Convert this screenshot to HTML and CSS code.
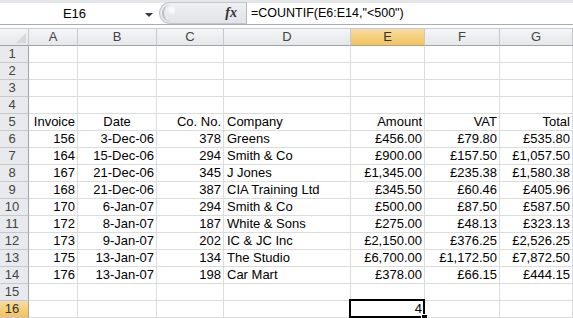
FILE: index.html
```html
<!DOCTYPE html>
<html lang="en">
<head>
    <meta charset="UTF-8">
    <title>Invoices - COUNTIF</title>
    <link rel="stylesheet" href="styles.css">
</head>
<body>

<!-- Formula bar: name box, fx button, formula -->
<div class="formula-bar">
    <div class="name-box">
        <span class="name">E16</span>
        <span class="arrow"></span>
    </div>
    <div class="fx-area">
        <span class="grip"></span>
        <span class="fx">fx</span>
    </div>
    <div class="formula">=COUNTIF(E6:E14,"&lt;500")</div>
</div>

<!-- Worksheet grid, filled in by the script below -->
<div id="sheet" class="sheet"></div>

<script>
// Column letters and the selected cell
const columns = ['A', 'B', 'C', 'D', 'E', 'F', 'G'];
const selectedCol = 'E';
const selectedRow = 16;

// Row data: [row number, A..G]. Alignment: r = right, c = centre, l = left
const align = ['r', 'r', 'r', 'l', 'r', 'r', 'r'];
const data = {
    5:  ['Invoice', 'Date', 'Co. No.', 'Company', 'Amount', 'VAT', 'Total'],
    6:  ['156', '3-Dec-06', '378', 'Greens', '£456.00', '£79.80', '£535.80'],
    7:  ['164', '15-Dec-06', '294', 'Smith & Co', '£900.00', '£157.50', '£1,057.50'],
    8:  ['167', '21-Dec-06', '345', 'J Jones', '£1,345.00', '£235.38', '£1,580.38'],
    9:  ['168', '21-Dec-06', '387', 'CIA Training Ltd', '£345.50', '£60.46', '£405.96'],
    10: ['170', '6-Jan-07', '294', 'Smith & Co', '£500.00', '£87.50', '£587.50'],
    11: ['172', '8-Jan-07', '187', 'White & Sons', '£275.00', '£48.13', '£323.13'],
    12: ['173', '9-Jan-07', '202', 'IC & JC Inc', '£2,150.00', '£376.25', '£2,526.25'],
    13: ['175', '13-Jan-07', '134', 'The Studio', '£6,700.00', '£1,172.50', '£7,872.50'],
    14: ['176', '13-Jan-07', '198', 'Car Mart', '£378.00', '£66.15', '£444.15'],
    16: ['', '', '', '', '4', '', '']
};

function cell(className, text) {
    const div = document.createElement('div');
    div.className = className;
    div.textContent = text;
    return div;
}

const sheet = document.getElementById('sheet');

// Header row
sheet.appendChild(cell('corner', ''));
columns.forEach(col => {
    sheet.appendChild(cell(col === selectedCol ? 'col-head active' : 'col-head', col));
});

// Body rows
for (let r = 1; r <= 16; r++) {
    sheet.appendChild(cell(r === selectedRow ? 'row-head active' : 'row-head', r));
    const values = data[r] || [];
    columns.forEach((col, i) => {
        let cls = 'cell ' + align[i];
        if (r === 5 && col === 'B') cls = 'cell c'; // "Date" heading is centred
        if (r === selectedRow && col === selectedCol) cls += ' selected';
        sheet.appendChild(cell(cls, values[i] || ''));
    });
}
</script>

</body>
</html>
```

FILE: styles.css
```css
body {
    margin: 0;
    font-family: 'Liberation Sans', Arial, sans-serif;
    font-size: 13px;
    color: #000;
    background: #ffffff;
    overflow: hidden;
}

/* ---------- formula bar ---------- */
.formula-bar {
    display: flex;
    height: 21px;
    border-top: 3px solid #e4e6e9;
    border-bottom: 1px solid #a9adb3;
    margin-bottom: 3px;
    background: #ffffff;
}

.formula-bar + .sheet {
    border-top: 1px solid #c9ccd1;
}

.name-box {
    width: 159px;
    display: flex;
    align-items: center;
    flex-shrink: 0;
}

.name {
    flex: 1;
    text-align: center;
    padding-left: 4px;
    font-size: 13px;
}

.arrow {
    width: 0;
    height: 0;
    border-left: 4px solid transparent;
    border-right: 4px solid transparent;
    border-top: 4px solid #3c3c3c;
    margin: 2px 6px 0 0;
}

.fx-area {
    width: 88px;
    flex-shrink: 0;
    display: flex;
    align-items: center;
    justify-content: space-between;
    background: linear-gradient(#eef0f3, #e1e4e8);
    border: 1px solid #c3c7cc;
    border-right: 1px solid #b5b9bf;
    border-radius: 11px 0 0 11px;
    margin: -1px 0 0 0;
    box-sizing: border-box;
    height: 22px;
}

.grip {
    width: 11px;
    height: 16px;
    margin-left: 2px;
    border-radius: 8px 0 0 8px;
    border-left: 2px solid #b9bec5;
    background: radial-gradient(circle at 8px 5px, #ffffff 0, #f4f5f7 3px, transparent 5px);
}

.fx {
    font-family: 'Liberation Serif', 'Times New Roman', serif;
    font-style: italic;
    font-weight: bold;
    font-size: 14px;
    color: #333;
    margin-right: 9px;
}

.formula {
    flex: 1;
    padding-left: 4px;
    font-size: 12.5px;
    line-height: 21px;
}

/* ---------- worksheet grid ---------- */
.sheet {
    display: grid;
    grid-template-columns: 29px 49px 79px 67px 127px 74px 75px 73px;
    grid-auto-rows: 17px;
}

.sheet > div {
    box-sizing: border-box;
    border-right: 1px solid #dadcdd;
    border-bottom: 1px solid #dadcdd;
    line-height: 16px;
    white-space: nowrap;
    overflow: hidden;
}

.corner,
.col-head,
.row-head {
    background: linear-gradient(#f5f6f7, #e5e7ea);
    color: #444;
}

.sheet > .corner {
    border-right: 1px solid #c5c8cc;
    border-bottom: 1px solid #9ea4ab;
    position: relative;
}

.corner::after {
    content: '';
    position: absolute;
    right: 2px;
    bottom: 2px;
    border-left: 10px solid transparent;
    border-bottom: 10px solid #d5d9de;
}

.sheet > .col-head {
    text-align: center;
    border-right: 1px solid #c5c8cc;
    border-bottom: 1px solid #9ea4ab;
}

.sheet > .row-head {
    text-align: center;
    background: #e8eaed;
    border-right: 1px solid #9ea4ab;
    border-bottom: 1px solid #c5c8cc;
    padding-right: 4px;
}

.sheet > .active {
    background: linear-gradient(#f9dc9c, #f2c35f);
    color: #333;
}

.cell {
    padding: 0 3px;
}

.cell.r { text-align: right; padding-right: 2px; }
.cell.c { text-align: center; }
.cell.l { text-align: left; }

/* selected cell outline with fill handle */
.sheet > .selected {
    position: relative;
    overflow: visible;
}

.selected::before {
    content: '';
    position: absolute;
    left: -2px;
    top: -2px;
    right: -1px;
    bottom: -1px;
    border: 2px solid #000;
}

.selected::after {
    content: '';
    position: absolute;
    right: -4px;
    bottom: -4px;
    width: 5px;
    height: 5px;
    background: #000;
    border: 1px solid #fff;
}
```
